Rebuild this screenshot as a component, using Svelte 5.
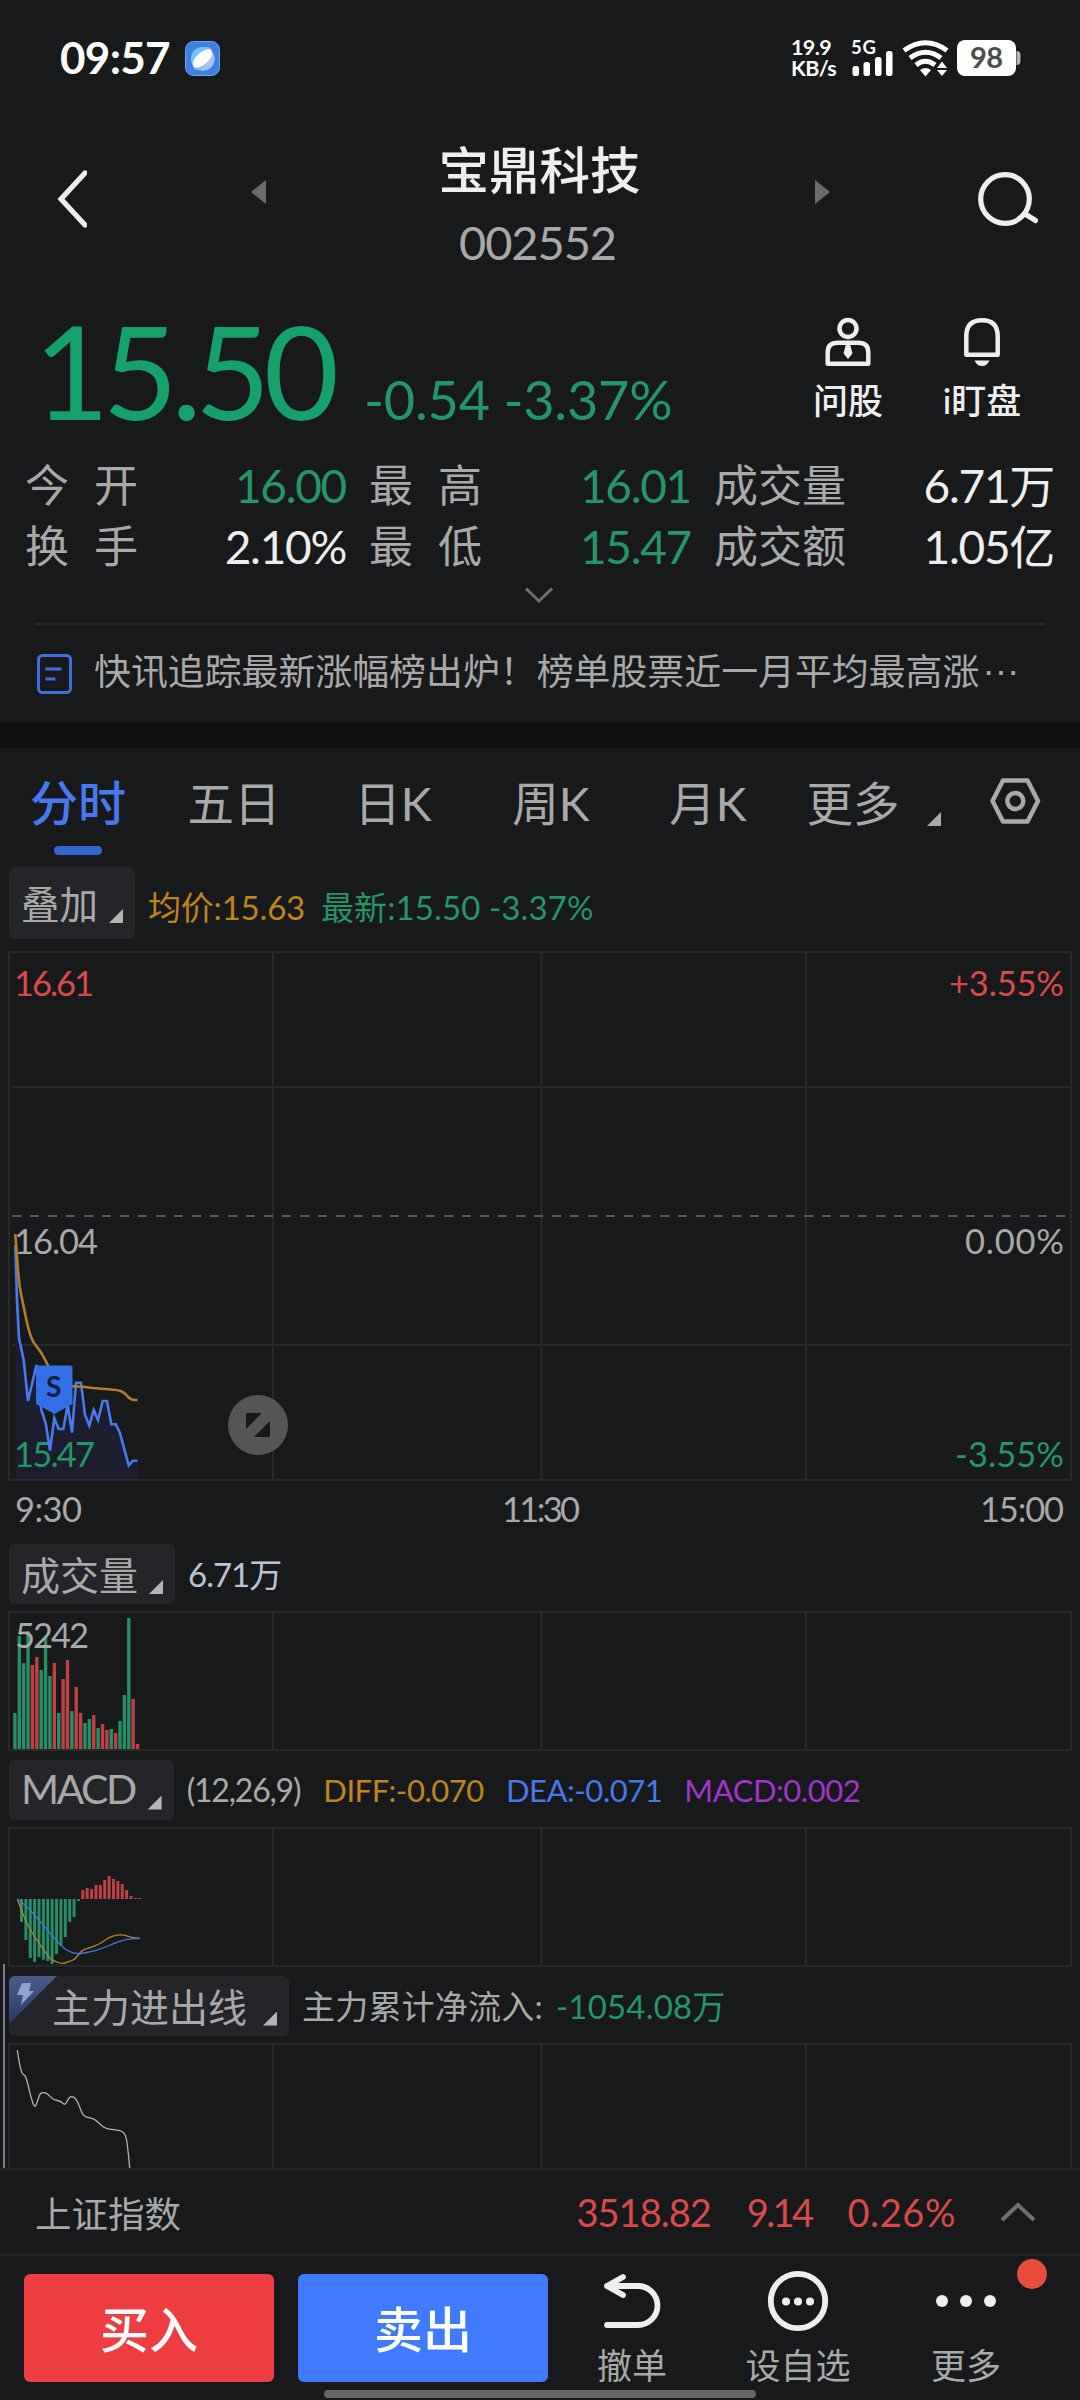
<script>
  const quotes = [
      { label: '今开', value: '16.00', tone: 'down', spread: true },
      { label: '最高', value: '16.01', tone: 'down', spread: true },
      { label: '成交量', value: '6.71万', tone: 'plain' },
      { label: '换手', value: '2.10%', tone: 'plain', spread: true },
      { label: '最低', value: '15.47', tone: 'down', spread: true },
      { label: '成交额', value: '1.05亿', tone: 'plain' },
  ];

  const tabs = ['分时', '五日', '日K', '周K', '月K', '更多'];
  let activeTab = '分时';

  // Vertical grid lines shared by every chart
  const columns = [273, 541.5, 806];

  const price = [
      [15.3, 1245], [17, 1300], [19, 1338], [23.7, 1360], [28, 1401], [36.5, 1365], [39.3, 1393], [41.3, 1410],
      [45.7, 1423], [50, 1450.5], [54.3, 1418], [58.7, 1429], [63.3, 1429], [67.7, 1405], [72, 1432.5],
      [76, 1382.7], [81, 1382.7], [85, 1415], [89.3, 1425.5], [93.7, 1410], [98, 1420], [102.7, 1401],
      [107, 1401], [111.3, 1424.3], [115.7, 1424.3], [120, 1433.3], [128.7, 1465.3], [133, 1460.7], [137.5, 1460.7],
  ];
  const average = [
      [15.3, 1234], [17.3, 1260], [19.3, 1287], [24, 1308], [28, 1328], [32.3, 1340.7], [36.7, 1346.7], [41.7, 1353],
      [47.7, 1365], [54, 1377], [63, 1384], [72.3, 1386.3], [83, 1386.7], [95, 1388.3], [116.7, 1389.7],
      [124, 1392.3], [128.7, 1398], [132.7, 1400], [137.5, 1400],
  ];

  // g = falling minute, r = rising minute, number = bar height
  const volumes = 'g36 g113 g86 g118 r84 r92 g79 g113 g73 r86 g36 r70 r89 g38 r62 r36 g26 g30 r34 g21 r25 r19 g20 r16 g28 g54 g131 r50 r5'
      .split(' ')
      .map((bar) => ({ up: bar[0] === 'r', size: +bar.slice(1) }));

  const macd = [
      -23, -41, -59, -63, -58, -60.7, -62, -65, -55, -47, -38, -23, -18, -2,
      9, 11, 10, 14, 14, 19, 23, 20, 18, 15, 9, 3, 1, 1,
  ];
  const diff = [
      [17.3, 1899], [21.7, 1911], [26.7, 1923], [33.3, 1935], [41.7, 1947], [50, 1959], [56.7, 1962], [63.3, 1964],
      [68.3, 1961.3], [74, 1960.3], [78.3, 1954.7], [83.3, 1949.3], [90, 1948], [98.3, 1944.3], [103.3, 1941.7],
      [109.3, 1937], [118.3, 1934.7], [125, 1935], [131.7, 1937.7], [140, 1938.3],
  ];
  const dea = [
      [17.3, 1899], [23.3, 1903.3], [33.3, 1913.3], [41.7, 1923.3], [53.3, 1936.7], [61.7, 1946.7], [70, 1952.3],
      [78.3, 1954], [90, 1952], [100, 1949.3], [113.3, 1943.7], [123.3, 1940], [131.7, 1938.7], [140, 1938.7],
  ];
  const flow = [
      [17.3, 2050], [19.3, 2063.3], [22, 2074], [25.3, 2075.3], [27.3, 2081.7], [30.7, 2096.7], [34.7, 2108.3],
      [37.3, 2101.7], [40, 2093.3], [43.3, 2092.3], [47.3, 2093.3], [53.3, 2100], [61, 2101], [65, 2105.7],
      [68.3, 2098.3], [71.7, 2096], [76, 2098.7], [79.3, 2106], [83.3, 2116.7], [91.7, 2118], [96.7, 2120.7],
      [105, 2129], [121.7, 2130.3], [126, 2135.3], [128, 2150], [129.7, 2168],
  ];

  function line(points) {
      return 'M' + points.map((p) => p.join(' ')).join('L');
  }

  // Rounds the corners by running quadratic curves through the midpoints
  function curve(points) {
      let d = `M${points[0].join(' ')}`;
      for (let i = 1; i < points.length - 1; i++) {
          const [x, y] = points[i];
          const [nx, ny] = points[i + 1];
          d += `Q${x} ${y} ${(x + nx) / 2} ${(y + ny) / 2}`;
      }
      return d + `L${points[points.length - 1].join(' ')}`;
  }
</script>

<div class="screen">
  <div class="status">
      <span class="clock">09:57</span>
      <svg class="app" width="35" height="35" viewBox="0 0 35 35">
          <rect x=".5" y=".5" width="34" height="34" rx="8" fill="#3f7fe0" stroke="#74a5ef" />
          <circle cx="17.5" cy="17.5" r="11.5" fill="#6bc8fb" />
          <path d="M28 12a11.500 11.500 0 0 1-20 12z" fill="#a9c3f4" />
          <ellipse cx="17.500" cy="17.500" rx="13" ry="7" transform="rotate(-55 17.500 17.500)" fill="#8fb4f2" />
          <ellipse cx="17.500" cy="17.500" rx="12" ry="6" transform="rotate(-42 17.500 17.500)" fill="#fff" />
      </svg>
      <div class="speed"><span>19.9</span><span>KB/s</span></div>
      <svg class="radio" width="172" height="50" viewBox="850 33 172 50">
          <text x="851" y="54" class="net" textLength="25">5G</text>
          <g fill="#fff">
              <rect x="852.500" y="66" width="6.500" height="10" rx="2.500" />
              <rect x="863.500" y="62" width="6.500" height="14" rx="2.500" />
              <rect x="875" y="57" width="6.500" height="19" rx="2.500" />
              <rect x="886" y="51" width="6.500" height="25" rx="2.500" />
          </g>
          <g fill="none" stroke="#fff" stroke-width="5">
              <path d="M904 50.500Q925.500 35 947 50.500" />
              <path d="M910 58Q925.500 46.500 941 58" />
              <path d="M916 65Q925.500 57.500 935 65" />
          </g>
          <g fill="#fff">
              <path d="M920 70q5.500-4 11 0l-5.500 6.500z" />
              <path d="M937 68h10l-5-6.500zM937 70h10l-5 6z" />
              <rect x="957" y="40" width="59" height="36" rx="8" />
          </g>
          <path d="M1016.500 51q4 0 4 4v6q0 4-4 4z" fill="#b5b5b5" />
          <text x="970" y="68" class="charge" textLength="33">98</text>
      </svg>
  </div>

  <header>
      <svg width="30" height="58" viewBox="0 0 30 58" class="back"><path d="M28 3 4 29 28 55" /></svg>
      <svg width="15" height="24" viewBox="0 0 15 24"><path d="M15 0v24L0 12z" fill="#6b6b6b" /></svg>
      <div class="title">
          <h1>宝鼎科技</h1>
          <p>002552</p>
      </div>
      <svg width="15" height="24" viewBox="0 0 15 24"><path d="M0 0v24l15-12z" fill="#6b6b6b" /></svg>
      <svg width="62" height="58" viewBox="976 169 62 58" class="search">
          <circle cx="1005" cy="198" r="24.300" />
          <path d="M1026 213.500 1035.500 219.500" />
      </svg>
  </header>

  <section class="headline">
      <span class="last">15.50</span>
      <span class="change">-0.54 -3.37%</span>
      <div class="action ask">
          <svg width="48" height="50" viewBox="824 317 48 50">
              <circle cx="848" cy="328.500" r="8.500" />
              <path d="M827.700 363.700v-11.500q0-9.500 10-9.500h20.600q10 0 10 9.500v11.500z" stroke-linejoin="round" />
              <path d="M846 344h4l2.500 9.500-4.500 5.500-4.500-5.500z" class="solid" />
          </svg>
          <span>问股</span>
      </div>
      <div class="action watch">
          <svg width="48" height="50" viewBox="958 317 48 50">
              <path d="M966.300 354.700v-18.500q0-16 15.700-16t15.700 16v18.500z" stroke-linejoin="round" />
              <path d="M974.500 360.500h15q-2.500 5.500-7.500 5.500t-7.500-5.500z" class="solid" />
          </svg>
          <span>i盯盘</span>
      </div>
  </section>

  <section class="quotes">
      {#each quotes as q}
          <div class="quote">
              <span class="name" class:spread={q.spread}>{q.label}</span>
              <span class="value {q.tone}">{q.value}</span>
          </div>
      {/each}
  </section>
  <svg class="expand" width="30" height="18" viewBox="0 0 30 18"><path d="M2 2.500 15 15 28 2.500" /></svg>

  <section class="news">
      <svg width="37" height="41" viewBox="0 0 37 41">
          <rect x="3.500" y="1.500" width="32" height="37" rx="4" />
          <path d="M10.500 15h16M10.500 25h10" />
      </svg>
      <span>快讯追踪最新涨幅榜出炉！榜单股票近一月平均最高涨</span><span class="dots">···</span>
  </section>

  <nav>
      {#each tabs as tab}
          <button class:active={tab === activeTab} on:click={() => (activeTab = tab)}>{tab}</button>
      {/each}
      <svg class="corner" width="14" height="14" viewBox="0 0 14 14"><path d="M14 0v14H0z" fill="#a9a9a9" /></svg>
      <svg class="settings" width="52" height="50" viewBox="988 776 52 50">
          <path d="M1002 780.500h24.500L1037 801l-10.500 20.500H1002L991.500 801z" stroke-linejoin="round" />
          <circle cx="1014.300" cy="801" r="8" />
      </svg>
  </nav>

  <div class="legend overlay">
      <button class="pill">叠加<i></i></button>
      <span class="orange">均价:15.63</span>
      <span class="green latest">最新:15.50 -3.37%</span>
  </div>

  <svg class="chart" width="1080" height="597" viewBox="0 943 1080 597">
      <g class="grid">
          <rect x="9" y="952" width="1062" height="528" />
          {#each columns as x}<path d="M{x} 952V1480" />{/each}
          <path d="M12 1087H1071M12 1345H1071" />
      </g>
      <path d="M12 1216H1068" stroke="#565a60" stroke-width="2" stroke-dasharray="9 9" />
      <path d="{line(price)}V1479H15.300Z" fill="#1c1d2f" />
      <g class="labels">
          <text x="14" y="996" class="red" textLength="80">16.61</text>
          <text x="949" y="996" class="red" textLength="115">+3.55%</text>
          <text x="14" y="1254" textLength="84">16.04</text>
          <text x="965" y="1254" textLength="99">0.00%</text>
          <text x="14" y="1467" class="green" textLength="81">15.47</text>
          <text x="955" y="1467" class="green" textLength="109">-3.55%</text>
          <text x="15" y="1522" textLength="67">9:30</text>
          <text x="502" y="1522" textLength="78">11:30</text>
          <text x="980" y="1522" textLength="84">15:00</text>
      </g>
      <path d={line(price)} fill="none" stroke="#487bef" stroke-width="2.600" />
      <path d={curve(average)} fill="none" stroke="#b47d2c" stroke-width="2.600" />
      <path d="M38 1365.500h32q2.500 0 2.500 2.500v36L54.500 1414 36 1404v-36q0-2.500 2-2.500z" fill="#336fe6" />
      <text x="46" y="1397" class="mark" textLength="16">S</text>
      <circle cx="258" cy="1425" r="30" fill="#555" />
      <path d="M246 1414q0-1 1-1h15l-16 16zM270 1421v15q0 1-1 1h-15z" fill="#17181a" />
  </svg>

  <div class="legend">
      <button class="pill">成交量<i></i></button>
      <span class="pale">6.71万</span>
  </div>
  <svg class="chart" width="1080" height="147" viewBox="0 1608 1080 147">
      <g class="grid">
          <rect x="9" y="1612" width="1062" height="138" />
          {#each columns as x}<path d="M{x} 1612V1750" />{/each}
      </g>
      {#each volumes as v, i}
          <rect x={13.2 + i * 4.38} y={1749 - v.size} width="3.400" height={v.size} fill={v.up ? '#bf4143' : '#278e66'} />
      {/each}
      <g class="labels"><text x="15" y="1648" textLength="74">5242</text></g>
  </svg>

  <div class="legend lower">
      <button class="pill macd">MACD<i></i></button>
      <span class="params">(12,26,9)</span>
      <span class="orange small">DIFF:-0.070</span>
      <span class="blue small">DEA:-0.071</span>
      <span class="purple small">MACD:0.002</span>
  </div>
  <svg class="chart" width="1080" height="147" viewBox="0 1824 1080 147">
      <g class="grid">
          <rect x="9" y="1828" width="1062" height="138" />
          {#each columns as x}<path d="M{x} 1828V1966" />{/each}
      </g>
      {#each macd as v, i}
          <rect x={20 + i * 4.38} y={v < 0 ? 1899 : 1899 - v} width="3" height={Math.abs(v)} fill={v < 0 ? '#278e66' : '#bf4143'} />
      {/each}
      <path d={curve(diff)} fill="none" stroke="#b98430" stroke-width="1.300" />
      <path d={curve(dea)} fill="none" stroke="#4677e0" stroke-width="1.300" />
      <path d="M4 1964V1971" stroke="#7b8091" stroke-width="2" />
  </svg>

  <div class="legend lower fund">
      <button class="pill">
          <svg width="48" height="48" viewBox="0 0 48 48">
              <defs>
                  <linearGradient id="fold" x1="0" y1="0" x2="0" y2="1">
                      <stop offset="0" stop-color="#4a5b8a" />
                      <stop offset="1" stop-color="#2b3a60" />
                  </linearGradient>
              </defs>
              <path d="M0 0h48L0 48z" fill="url(#fold)" />
              <path d="M13 7h9l-2 8h5L12 29l2-10H8z" fill="#8ea2d4" />
          </svg>
          主力进出线<i></i>
      </button>
      <span>主力累计净流入:</span>
      <span class="green">-1054.08万</span>
  </div>
  <svg class="chart" width="1080" height="128" viewBox="0 2040 1080 128">
      <g class="grid">
          <path d="M9 2168V2044H1071V2168" />
          {#each columns as x}<path d="M{x} 2044V2168" />{/each}
      </g>
      <path d={curve(flow)} fill="none" stroke="#b3b3b3" stroke-width="1.300" />
      <path d="M4 2040V2168" stroke="#7b8091" stroke-width="2" />
  </svg>

  <section class="index">
      <span class="market">上证指数</span>
      <span class="figure">3518.82</span>
      <span class="figure points">9.14</span>
      <span class="figure percent">0.26%</span>
      <svg width="38" height="22" viewBox="0 0 38 22"><path d="M3 19 19 4 35 19" /></svg>
  </section>

  <footer>
      <button class="trade buy">买入</button>
      <button class="trade sell">卖出</button>
      <div class="tool">
          <svg width="64" height="64" viewBox="600 2269 64 64">
              <path d="M607 2325h31a19.500 19.500 0 0 0 0-39h-31M623 2277l-16 9 16 9" stroke-linejoin="round" />
          </svg>
          <span>撤单</span>
      </div>
      <div class="tool pick">
          <svg width="64" height="64" viewBox="766 2269 64 64">
              <circle cx="798" cy="2301" r="27.200" />
              <g class="solid"><circle cx="786" cy="2301.500" r="4" /><circle cx="798" cy="2301.500" r="4" /><circle cx="810" cy="2301.500" r="4" /></g>
          </svg>
          <span>设自选</span>
      </div>
      <div class="tool more">
          <svg width="64" height="64" viewBox="934 2269 64 64">
              <g class="solid"><circle cx="942" cy="2301" r="6" /><circle cx="966" cy="2301" r="6" /><circle cx="990" cy="2301" r="6" /></g>
          </svg>
          <span>更多</span>
          <b class="badge"></b>
      </div>
  </footer>
  <div class="home"></div>
</div>

<style>
  :global(body) {
      background: #17191a;
  }

  .screen {
      width: 1080px;
      height: 2400px;
      overflow: hidden;
      display: flex;
      flex-direction: column;
      background: #17191a;
      color: #a9a9a9;
      font-family: Lato, "Noto Sans CJK SC", sans-serif;
      white-space: nowrap;
  }

  .screen > * {
      flex-shrink: 0;
      box-sizing: border-box;
  }

  button {
      border: 0;
      padding: 0;
      background: none;
      color: inherit;
      font: inherit;
  }

  svg {
      display: block;
      flex-shrink: 0;
  }

  .green, .down { color: #249668; fill: #249668; }
  .red { fill: #d94a4c; }
  .orange { color: #c0841f; }
  .blue { color: #4679e8; }
  .purple { color: #a035c8; }
  .pale { color: #b9c3da; letter-spacing: -1px; }
  .plain { color: #eee; }

  /* Status bar */
  .status {
      height: 116px;
      display: flex;
      align-items: center;
      padding-left: 60px;
      color: #fff;
      font-weight: 700;
  }

  .clock {
      width: 125px;
      font-size: 44px;
      line-height: 54px;
      margin-top: -2px;
      letter-spacing: -0.7px;
  }

  .speed {
      margin-left: 571px;
      width: 59px;
      display: flex;
      flex-direction: column;
      font-size: 21.500px;
      line-height: 21px;
      letter-spacing: -0.6px;
  }

  .net {
      fill: #fff;
      font-size: 18.500px;
  }

  .charge {
      fill: #4c4c4c;
      font-size: 29px;
  }

  /* Title row */
  header {
      height: 174px;
      display: flex;
      align-items: flex-start;
      padding: 54px 42px 0 57px;
  }

  header > svg:nth-of-type(2) { margin: 10px 0 0 164px; }
  header > svg:nth-of-type(3) { margin: 10px 0 0 0; }

  .back path, .search * {
      fill: none;
      stroke: #eee;
      stroke-width: 5.200;
      stroke-linecap: round;
  }

  .search { margin-left: auto; }

  .title {
      width: 549px;
      margin-top: -31px;
      text-align: center;
      padding-right: 2px;
      box-sizing: border-box;
  }

  h1 {
      margin: 0;
      font-size: 50.500px;
      line-height: 62px;
      font-weight: 500;
      color: #eee;
  }

  .title p {
      margin: 9px 0 0;
      font-size: 47px;
      line-height: 64px;
      letter-spacing: -1.100px;
      padding-right: 4px;
  }

  /* Last price */
  .headline {
      height: 162px;
      display: flex;
      padding-left: 34px;
  }

  .last {
      width: 330px;
      font-size: 130px;
      line-height: 161px;
      letter-spacing: -6.800px;
      color: #16a06b;
  }

  .change {
      width: 432px;
      font-size: 54px;
      line-height: 219px;
      letter-spacing: -0.200px;
      color: #249668;
  }

  .action {
      width: 104px;
      display: flex;
      flex-direction: column;
      align-items: center;
      padding-top: 27px;
      font-size: 35px;
      line-height: 40px;
      font-weight: 500;
      color: #eee;
      gap: 13px;
  }

  .watch { margin-left: 30px; }

  .action path, .action circle {
      fill: none;
      stroke: #eee;
      stroke-width: 4.500;
  }

  .action .solid {
      fill: #eee;
      stroke: none;
  }

  /* Quote grid */
  .quotes {
      height: 134px;
      display: grid;
      grid-template-columns: 322px 323px 341px;
      grid-auto-rows: 61px;
      column-gap: 22px;
      padding: 3px 0 0 25px;
      line-height: 61px;
  }

  .quote {
      display: flex;
      justify-content: space-between;
  }

  .name { font-size: 44px; }
  .spread { letter-spacing: 25px; }

  .value {
      margin-right: 1px;
      font-size: 46px;
      letter-spacing: -1.300px;
  }

  .expand {
      margin: 0 0 21px 524px;
      fill: none;
      stroke: #707070;
      stroke-width: 3;
  }

  /* News line */
  .news {
      height: 100px;
      margin: -2px 35px 0;
      border-top: 2px solid #242527;
      display: flex;
      align-items: center;
      font-size: 36.900px;
  }

  .news svg {
      margin-right: 22px;
      fill: none;
      stroke: #3d6fdd;
      stroke-width: 3;
  }

  .news span {
      line-height: 50px;
      margin-top: -6px;
  }

  .dots {
      margin-left: 3px;
      font-family: "Liberation Sans", sans-serif;
      letter-spacing: 0;
  }

  /* Period tabs */
  nav {
      height: 143px;
      border-top: 25px solid #101113;
      display: grid;
      grid-template-columns: 156px 156px 162px 154px 160px 131px 60px 101px;
      align-items: start;
      line-height: 110px;
      font-size: 46.500px;
  }

  nav button {
      height: 108px;
      display: flex;
      flex-direction: column;
      align-items: center;
  }

  nav button:nth-of-type(6) { margin-left: -1px; }
  nav .corner { margin: 64px 0 0 8px; }
  nav .settings { margin: 28px 0 0 10px; }

  .settings * {
      fill: none;
      stroke: #a9a9a9;
      stroke-width: 4.500;
  }

  nav .active {
      color: #4679f2;
      font-size: 48px;
      font-weight: 500;
  }

  .active::after {
      content: "";
      width: 48px;
      height: 9px;
      margin-top: -12px;
      border-radius: 5px;
      background: #3367cf;
  }

  /* Indicator headings */
  .legend {
      height: 68px;
      display: flex;
      align-items: center;
      padding-left: 9px;
      font-size: 33px;
  }

  .lower { height: 69px; }

  .legend > span { line-height: 60px; }

  .overlay {
      height: 77px;
      align-items: flex-start;
      padding-top: 1px;
  }

  .overlay > span { line-height: 81px; margin-right: 16px; letter-spacing: -0.200px; }
  .overlay .latest { letter-spacing: 0.100px; }

  .pill {
      height: 60px;
      display: flex;
      align-items: center;
      padding: 0 12px 2px;
      box-sizing: border-box;
      margin-right: 13px;
      border-radius: 6px;
      background: #242529;
      font-size: 39px;
  }

  .overlay .pill { height: 72px; font-size: 38.500px; }
  .macd { font-size: 41px; letter-spacing: -2.500px; }

  .pill i {
      width: 14px;
      height: 14px;
      margin: 28px 0 0 11px;
      background: #b5b5b5;
      clip-path: polygon(100% 0, 100% 100%, 0 100%);
  }

  .pill.macd i { margin-left: 13px; }

  .params {
      margin-right: 23px;
      font-size: 32px;
      letter-spacing: -1.200px;
  }

  .small {
      margin-right: 22px;
      font-size: 31px;
      letter-spacing: -0.450px;
  }

  .grid {
      fill: none;
      stroke: #27282a;
      stroke-width: 2;
  }

  .labels {
      font-size: 34.500px;
      fill: #a9a9a9;
  }

  .mark {
      font-size: 28px;
      font-weight: 700;
      fill: #0d2044;
  }

  .fund { background: linear-gradient(#7b8091, #7b8091) 3px 0 / 2px 100% no-repeat; }

  .fund .pill {
      padding-left: 0;
      overflow: hidden;
  }

  .fund .pill svg {
      align-self: flex-start;
      margin-right: -5px;
  }

  .fund .pill i { margin-left: 16px; }
  .fund > span { margin-right: 13px; letter-spacing: 0.200px; }

  /* Index strip */
  .index {
      height: 88px;
      border-top: 2px solid #242527;
      border-bottom: 2px solid #242527;
      display: flex;
      align-items: center;
      padding: 0 43px 0 35px;
      font-size: 36.500px;
  }

  .market { margin-right: auto; }

  .figure {
      margin-right: 36px;
      font-size: 38px;
      letter-spacing: -1px;
      color: #d94a4c;
  }

  .points { letter-spacing: -2.600px; }
  .percent { letter-spacing: 0.600px; }

  .index svg {
      margin-left: 7px;
      fill: none;
      stroke: #707070;
      stroke-width: 4;
  }

  /* Trade bar */
  footer {
      height: 134px;
      display: flex;
      padding-left: 24px;
  }

  .trade {
      width: 250px;
      height: 108px;
      margin: 18px 24px 0 0;
      padding-bottom: 3px;
      border-radius: 6px;
      color: #fff;
      font-size: 49px;
      font-weight: 500;
  }

  .buy { background: #ee3d41; }
  .sell { background: #3f7aff; }

  .tool {
      width: 120px;
      display: flex;
      flex-direction: column;
      align-items: center;
      padding-top: 13px;
      font-size: 35px;
      line-height: 40px;
      gap: 12px;
      position: relative;
  }

  .pick { margin-left: 46px; }
  .more { margin-left: 48px; }

  .tool path, .tool circle {
      fill: none;
      stroke: #eee;
      stroke-width: 5.800;
      stroke-linecap: round;
  }

  .tool .solid circle {
      fill: #eee;
      stroke: none;
  }

  .badge {
      position: absolute;
      top: 3px;
      right: -21px;
      width: 30px;
      height: 30px;
      border-radius: 50%;
      background: #e74c3c;
  }

  .home {
      width: 432px;
      height: 8px;
      margin: 0 auto;
      border-radius: 4px;
      background: #656667;
  }
</style>
